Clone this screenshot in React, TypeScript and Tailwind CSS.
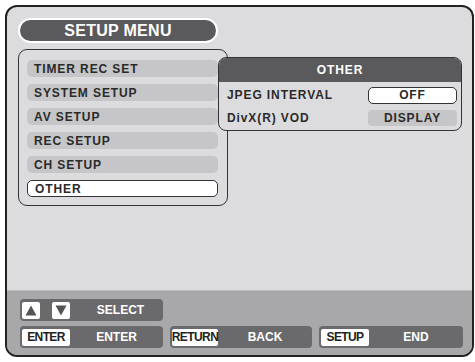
import React from 'react';

const menuItems = ['TIMER REC SET', 'SYSTEM SETUP', 'AV SETUP', 'REC SETUP', 'CH SETUP', 'OTHER'];

const Key = ({ label, w }: { label: string; w: string }) => (
    <div className={`${w} h-[17px] bg-white rounded-[2px] flex items-center justify-center text-[12px] font-bold text-[#222] tracking-[-0.6px] whitespace-nowrap`}>
        {label}
    </div>
);

const Arrow = ({ up }: { up?: boolean }) => (
    <div className="w-[18px] h-[17px] bg-white rounded-[2px] flex items-center justify-center">
        <svg width="12" height="11" viewBox="0 0 12 11">
            {up ? <polygon points="6,0.5 11.5,10.5 0.5,10.5" fill="#555" /> : <polygon points="0.5,0.5 11.5,0.5 6,10.5" fill="#555" />}
        </svg>
    </div>
);

const App = () => {
    return (
        <div className="w-[475px] h-[362px] bg-white pt-[5px] pl-[5px]" style={{ fontFamily: '"Liberation Sans", Arial, sans-serif' }}>
            <div className="w-[469px] h-[352px] border-2 border-[#222] rounded-[12px] bg-[#dcdcde] overflow-hidden flex flex-col">
                <div className="relative flex-1 pt-[11px] pl-[11px]">
                    <div className="w-[200px] h-[25px] rounded-full bg-[#5a5a5c] border-2 border-white flex items-center justify-center text-white text-[16px] font-bold tracking-[0.3px]">
                        SETUP MENU
                    </div>
                    <div className="mt-[6px] w-[210px] h-[157px] border-[1.5px] border-[#333] rounded-[9px] pt-[10px] pl-[8px] flex flex-col gap-[7px]">
                        {menuItems.map((item) => (
                            <div
                                key={item}
                                className={`w-[191px] h-[17px] rounded-[5px] flex items-center pl-[7px] text-[12px] font-bold tracking-[0.9px] text-[#2a2a2a] ${
                                    item === 'OTHER' ? 'bg-white border-[1.5px] border-[#333]' : 'bg-[#c6c6c8]'
                                }`}
                            >
                                {item}
                            </div>
                        ))}
                    </div>
                    <div className="absolute left-[211px] top-[50px] w-[244px] h-[74px] border-[1.5px] border-[#333] rounded-[8px] bg-[#dcdcde] overflow-hidden">
                        <div className="h-[24px] bg-[#5a5a5c] flex items-center justify-center text-white text-[12px] font-bold tracking-[0.9px]">
                            OTHER
                        </div>
                        <div className="flex items-center justify-between pl-[8px] pr-[4px] mt-[4px]">
                            <span className="text-[12px] font-bold tracking-[0.9px] text-[#2a2a2a]">JPEG INTERVAL</span>
                            <div className="w-[89px] h-[17px] bg-white border-[1.5px] border-[#333] rounded-[5px] flex items-center justify-center text-[12px] font-bold tracking-[0.9px] text-[#2a2a2a]">
                                OFF
                            </div>
                        </div>
                        <div className="flex items-center justify-between pl-[8px] pr-[4px] mt-[5px]">
                            <span className="text-[12px] font-bold tracking-[0.9px] text-[#2a2a2a]">DivX(R) VOD</span>
                            <div className="w-[89px] h-[16px] bg-[#c6c6c8] rounded-[4px] flex items-center justify-center text-[12px] font-bold tracking-[0.9px] text-[#2a2a2a]">
                                DISPLAY
                            </div>
                        </div>
                    </div>
                </div>
                <div className="h-[65px] bg-[#a8a8aa] border-t border-[#bcbcbe] pt-[8px] pl-[13px] flex flex-col gap-[5px]">
                    <div className="w-[143px] h-[22px] rounded-[4px] bg-[#6a6a6c] flex items-center pl-[2px] gap-[12px]">
                        <Arrow up />
                        <Arrow />
                        <span className="flex-1 text-center text-white text-[12px] font-bold pr-[4px]">SELECT</span>
                    </div>
                    <div className="flex gap-[7px]">
                        <div className="w-[143px] h-[22px] rounded-[4px] bg-[#6a6a6c] flex items-center pl-[2px]">
                            <Key label="ENTER" w="w-[48px]" />
                            <span className="flex-1 text-center text-white text-[12px] font-bold">ENTER</span>
                        </div>
                        <div className="w-[142px] h-[22px] rounded-[4px] bg-[#6a6a6c] flex items-center pl-[2px]">
                            <Key label="RETURN" w="w-[46px]" />
                            <span className="flex-1 text-center text-white text-[12px] font-bold">BACK</span>
                        </div>
                        <div className="w-[144px] h-[22px] rounded-[4px] bg-[#6a6a6c] flex items-center pl-[2px]">
                            <Key label="SETUP" w="w-[48px]" />
                            <span className="flex-1 text-center text-white text-[12px] font-bold">END</span>
                        </div>
                    </div>
                </div>
            </div>
        </div>
    );
};

export default App;
